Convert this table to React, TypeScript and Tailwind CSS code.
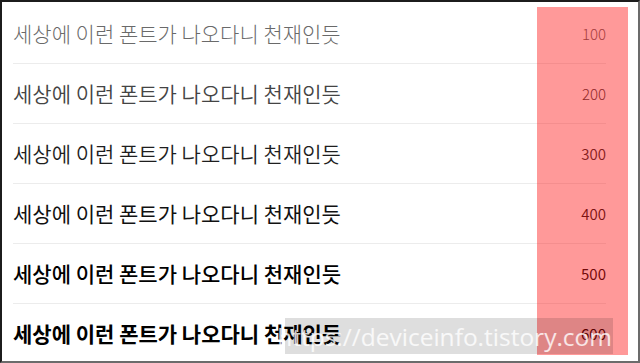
const ROWS = [
  { weight: 'font-light', color: 'text-[#6a6a6a]', num: 'font-light text-[#666]', label: '100' },
  { weight: 'font-[350]', color: 'text-[#444]', num: 'font-light text-[#444]', label: '200' },
  { weight: 'font-[350]', color: 'text-[#1e1e1e]', num: 'font-[350] text-[#333]', label: '300' },
  { weight: 'font-normal', color: 'text-[#111]', num: 'font-[350] text-[#222]', label: '400' },
  { weight: 'font-medium', color: 'text-[#000]', num: 'font-normal text-[#111]', label: '500' },
  { weight: 'font-bold', color: 'text-[#000]', num: 'font-normal text-[#000]', label: '600' },
];

const SAMPLE = '세상에 이런 폰트가 나오다니 천재인듯';

export default function App() {
  return (
    <div
      className="relative w-[640px] h-[363px] overflow-hidden bg-white border-2 border-t-[#1c1c1c] border-l-[#1c1c1c] border-r-[#6b6b6b] border-b-[#6b6b6b]"
      style={{ fontFamily: '"Noto Sans CJK KR", "Noto Sans", sans-serif' }}
    >
      <div className="flex flex-col pt-[2px] pl-[11px] w-[604px]">
        {ROWS.map(r => (
          <div
            key={r.label}
            className="flex items-center justify-between h-[60px] shrink-0 border-b border-[#ececec]"
          >
            <span className={`text-[21px] leading-none ${r.weight} ${r.color}`}>{SAMPLE}</span>
            <span className={`text-[15px] leading-none ${r.num}`}>{r.label}</span>
          </div>
        ))}
      </div>

      {/* highlight column */}
      <div className="absolute left-[535px] top-[5px] w-[91px] h-[348px] bg-[#ff0000]/40" />

      {/* watermark */}
      <div className="absolute left-[283px] top-[316px] w-[328px] h-[36px] bg-black/[0.13] flex items-center justify-end pr-[1px] pt-[2px]">
        <span className="text-[24.5px] leading-none text-white/80" style={{ fontFamily: '"Open Sans", "Noto Sans", sans-serif' }}>
          https://deviceinfo.tistory.com
        </span>
      </div>
    </div>
  );
}
